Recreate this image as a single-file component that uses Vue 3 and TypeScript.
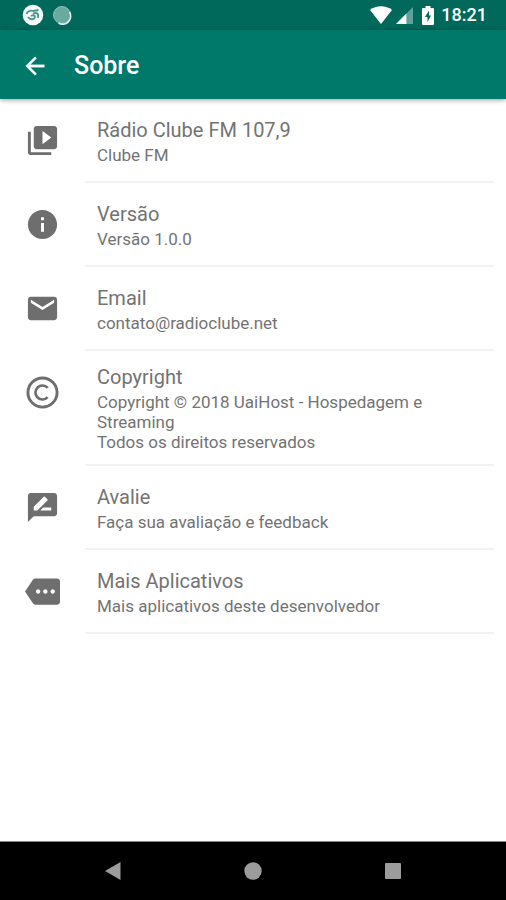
<script setup lang="ts">
type IconName = 'library' | 'info' | 'mail' | 'copyright' | 'review' | 'more'

interface AboutItem {
  icon: IconName
  title: string
  lines: string[]
}

const items: AboutItem[] = [
  { icon: 'library', title: 'Rádio Clube FM 107,9', lines: ['Clube FM'] },
  { icon: 'info', title: 'Versão', lines: ['Versão 1.0.0'] },
  { icon: 'mail', title: 'Email', lines: ['contato@radioclube.net'] },
  {
    icon: 'copyright',
    title: 'Copyright',
    lines: ['Copyright © 2018 UaiHost - Hospedagem e Streaming', 'Todos os direitos reservados'],
  },
  { icon: 'review', title: 'Avalie', lines: ['Faça sua avaliação e feedback'] },
  { icon: 'more', title: 'Mais Aplicativos', lines: ['Mais aplicativos deste desenvolvedor'] },
]

const iconPaths: Record<IconName, string> = {
  library:
    'M4 6H2v14c0 1.1.9 2 2 2h14v-2H4V6zm16-4H8c-1.1 0-2 .9-2 2v12c0 1.1.9 2 2 2h12c1.1 0 2-.9 2-2V4c0-1.1-.9-2-2-2zm-8 12.5v-9l6 4.5-6 4.5z',
  info: 'M12 2C6.48 2 2 6.48 2 12s4.48 10 10 10 10-4.48 10-10S17.52 2 12 2zm1 15h-2v-6h2v6zm0-8h-2V7h2v2z',
  mail: 'M20 4H4c-1.1 0-2 .9-2 2v12c0 1.1.9 2 2 2h16c1.1 0 2-.9 2-2V6c0-1.1-.9-2-2-2zm0 4l-8 5-8-5V6l8 5 8-5v2z',
  copyright:
    'M12 1a11 11 0 1 0 0 22a11 11 0 0 0 0-22zm0 2a9 9 0 1 1 0 18a9 9 0 0 1 0-18zM16.2 8.2A5.7 5.7 0 1 0 16.2 15.8L14.9 14.6A3.9 3.9 0 1 1 14.9 9.4z',
  review:
    'M20 2H4c-1.1 0-2 .9-2 2v18l4-4h14c1.1 0 2-.9 2-2V4c0-1.1-.9-2-2-2zM6 14v-2.47l6.88-6.88c.2-.2.51-.2.71 0l1.77 1.77c.2.2.2.51 0 .71L8.47 14H6zm12 0h-7.5l2-2H18v2z',
  more: 'M22 3H7c-.69 0-1.23.35-1.59.88L0 12l5.41 8.11c.36.53.9.89 1.59.89h15c1.1 0 2-.9 2-2V5c0-1.1-.9-2-2-2zM9 13.5c-.83 0-1.5-.67-1.5-1.5s.67-1.5 1.5-1.5 1.5.67 1.5 1.5-.67 1.5-1.5 1.5zm5 0c-.83 0-1.5-.67-1.5-1.5s.67-1.5 1.5-1.5 1.5.67 1.5 1.5-.67 1.5-1.5 1.5zm5 0c-.83 0-1.5-.67-1.5-1.5s.67-1.5 1.5-1.5 1.5.67 1.5 1.5-.67 1.5-1.5 1.5z',
}
</script>

<template>
  <div class="screen">
    <div class="status-bar">
      <div class="status-group">
        <svg class="notice" viewBox="0 0 22 22" aria-hidden="true">
          <circle cx="11" cy="11" r="10.3" fill="#f4faf8" />
          <path
            d="M4.500 10c1-3 4-4 7-3l5-1M6 13c2 3 6 3 7 0c0-2-3-2-4-1M11 10c3-2 6-1 5 4"
            fill="none"
            stroke="#4d968b"
            stroke-width="1.800"
          />
        </svg>
        <svg class="notice" viewBox="0 0 22 22" aria-hidden="true">
          <circle cx="11" cy="11" r="8.500" fill="#6aaba1" stroke="#8cc0b8" stroke-width="1" />
          <path d="M18.500 8a8 8 0 0 1-11 11" fill="none" stroke="#e4f3f0" stroke-width="1.600" />
        </svg>
      </div>
      <div class="status-group status-right">
        <svg class="wifi" viewBox="0 0 22 18" aria-hidden="true">
          <path d="M11 18L0 4C6-1 16-1 22 4z" fill="#fff" />
        </svg>
        <svg class="signal" viewBox="0 0 18 18" aria-hidden="true">
          <path d="M0 18L18 0v18z" fill="#5da198" />
          <path d="M0 18L11 7v11z" fill="#fff" />
        </svg>
        <svg class="battery" viewBox="0 0 12 19" aria-hidden="true">
          <path d="M3.500 0h5v2H11a1 1 0 0 1 1 1v15a1 1 0 0 1-1 1H1a1 1 0 0 1-1-1V3a1 1 0 0 1 1-1h2.500z" fill="#fff" />
          <path d="M7 4.500L3 11h2.500v5L9 9.500H7z" fill="#00695c" />
        </svg>
        <span class="clock">18:21</span>
      </div>
    </div>

    <header class="app-bar">
      <button class="back" type="button" aria-label="Voltar">
        <svg viewBox="0 0 24 24" aria-hidden="true">
          <path
            d="M20 11H7.830l5.590-5.590L12 4l-8 8 8 8 1.410-1.410L7.830 13H20v-2z"
            fill="#fff"
            stroke="#fff"
            stroke-width="0.300"
          />
        </svg>
      </button>
      <h1>Sobre</h1>
    </header>

    <main>
      <ul class="list">
        <li v-for="item in items" :key="item.icon" class="item">
          <svg class="item-icon" viewBox="0 0 24 24" aria-hidden="true">
            <path :d="iconPaths[item.icon]" fill="#6e6e6e" fill-rule="evenodd" />
          </svg>
          <div class="item-body">
            <h2>{{ item.title }}</h2>
            <p v-for="line in item.lines" :key="line">{{ line }}</p>
          </div>
        </li>
      </ul>
    </main>

    <nav class="nav-bar">
      <button type="button" aria-label="Retornar">
        <svg viewBox="0 0 20 20" aria-hidden="true"><path d="M2 10L17.500 1v18z" fill="#9c9c9c" /></svg>
      </button>
      <button type="button" aria-label="Início">
        <svg viewBox="0 0 20 20" aria-hidden="true"><circle cx="10" cy="10" r="8.700" fill="#9c9c9c" /></svg>
      </button>
      <button type="button" aria-label="Recentes">
        <svg viewBox="0 0 20 20" aria-hidden="true"><rect x="2" y="2" width="16" height="16" rx="1" fill="#9c9c9c" /></svg>
      </button>
    </nav>
  </div>
</template>

<style>
body {
  background: #fff;
}
</style>

<style scoped>
.screen {
  display: flex;
  flex-direction: column;
  min-height: 100vh;
  font-family: Roboto, "Liberation Sans", sans-serif;
  color: #737373;
}

.status-bar {
  display: flex;
  align-items: center;
  justify-content: space-between;
  height: 30px;
  padding: 0 19px 0 22px;
  background: #00695c;
}

.status-group {
  display: flex;
  align-items: center;
  gap: 7px;
}

.status-right {
  gap: 4px;
}

.notice {
  width: 22px;
  height: 22px;
}

.wifi {
  width: 22px;
  height: 18px;
}

.signal {
  width: 17px;
  height: 17px;
}

.battery {
  width: 12px;
  height: 19px;
  margin: 0 3px 0 5px;
}

.clock {
  font-size: 18px;
  font-weight: 500;
  line-height: 32px;
  color: #fff;
}

.app-bar {
  display: flex;
  align-items: center;
  gap: 25px;
  height: 69px;
  padding: 2px 21px 0;
  box-sizing: border-box;
  background: #00796b;
  box-shadow: 0 1px 5px rgba(0, 0, 0, 0.4);
}

.back {
  display: flex;
  padding: 0;
  border: 0;
  background: none;
}

.back svg {
  width: 28px;
  height: 28px;
}

h1 {
  margin: 0;
  font-size: 25px;
  font-weight: 500;
  line-height: 32px;
  color: #fff;
}

main {
  flex: 1;
}

.list {
  margin: 0;
  padding: 0;
  list-style: none;
}

.item {
  display: flex;
  align-items: flex-start;
  gap: 25px;
  padding: 0 12px 0 25px;
}

.item-icon {
  flex: none;
  width: 35px;
  height: 35px;
  margin-top: 24px;
}

.item-body {
  display: flex;
  flex: 1;
  flex-direction: column;
  justify-content: center;
  min-height: 84px;
  padding: 14px 40px 12px 12px;
  box-sizing: border-box;
  border-bottom: 2px solid #f2f2f2;
}

h2 {
  margin: 0 0 2px;
  font-size: 20px;
  font-weight: 400;
  line-height: 25px;
}

p {
  margin: 0;
  font-size: 17px;
  line-height: 20px;
}

.nav-bar {
  display: flex;
  height: 59px;
  padding: 0 43px;
  box-sizing: border-box;
  border-top: 1px solid #888;
  background: #000;
}

.nav-bar button {
  display: flex;
  flex: 1;
  align-items: center;
  justify-content: center;
  padding: 0;
  border: 0;
  background: none;
}

.nav-bar svg {
  width: 20px;
  height: 20px;
}
</style>
